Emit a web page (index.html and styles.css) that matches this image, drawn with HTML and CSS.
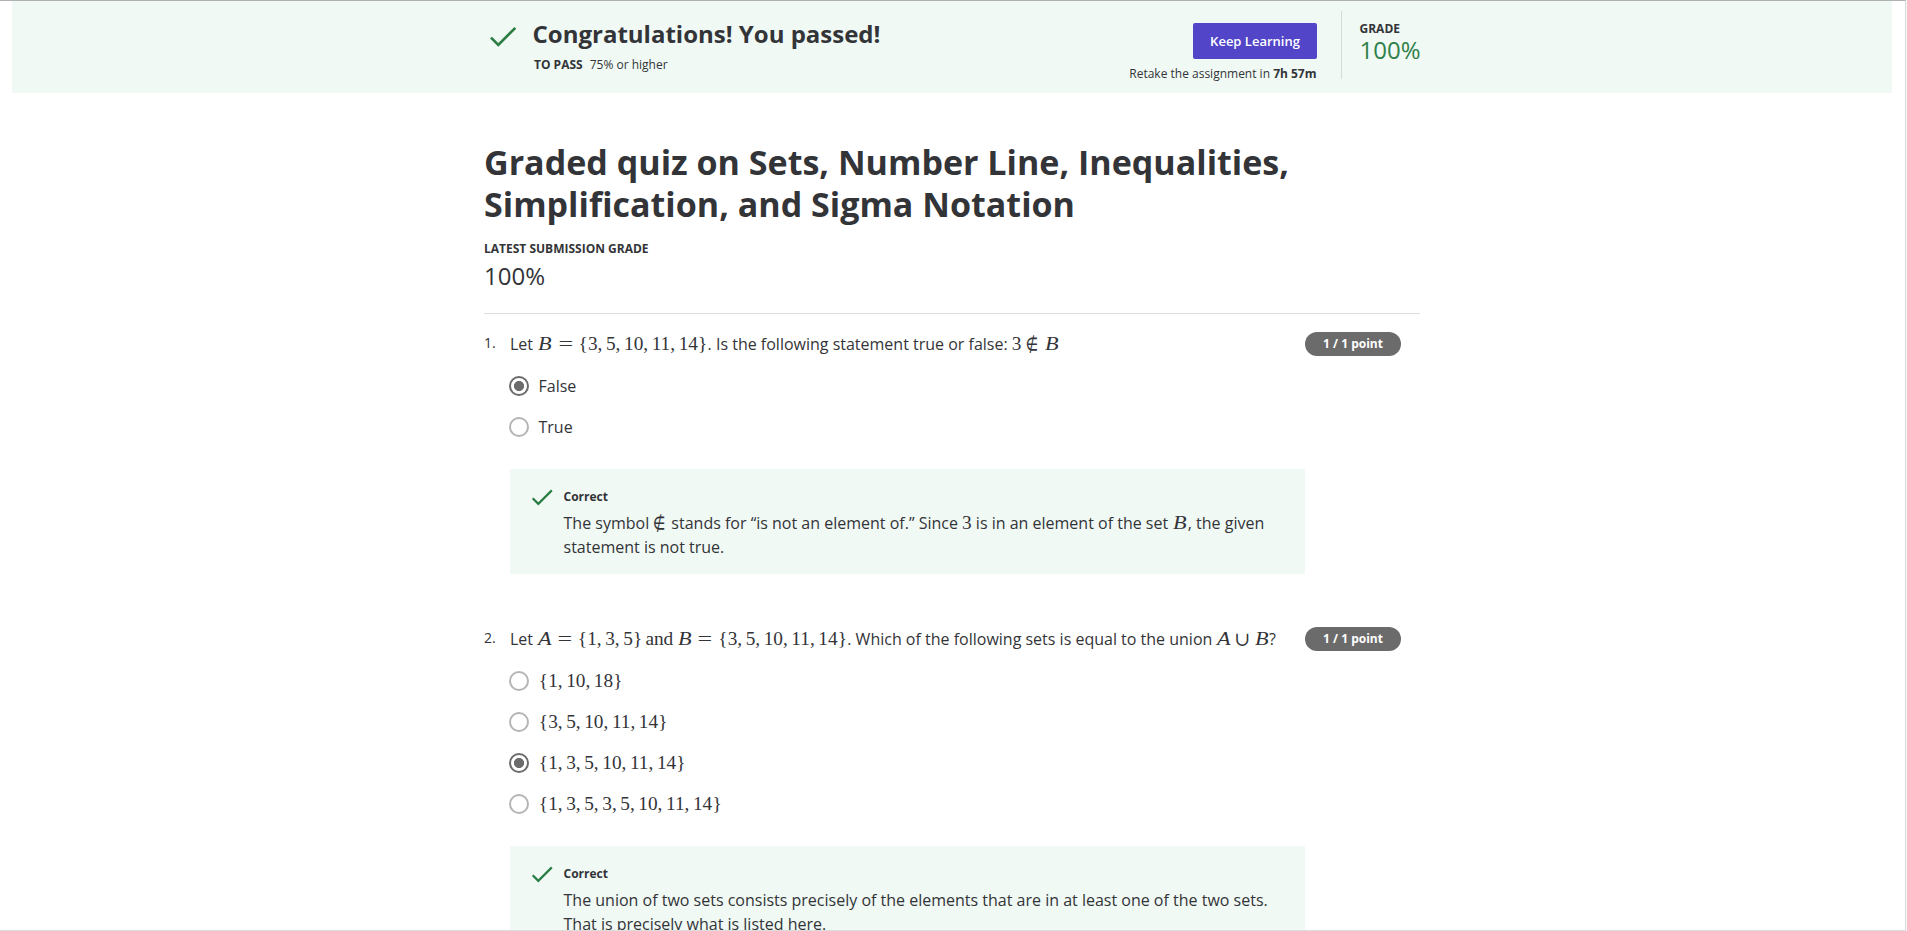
FILE: index.html
```html
<!DOCTYPE html>
<html lang="en">
<head>
<meta charset="utf-8">
<title>Graded quiz</title>
<link rel="stylesheet" href="styles.css">
</head>
<body>
<div class="window">
  <header class="banner">
    <div class="banner-inner">
      <svg class="banner-check" viewBox="0 0 28 24"><path d="M3 13.6 10.3 20.9 27.3 3.9"/></svg>
      <div class="banner-copy">
        <h2 class="banner-title">Congratulations! You passed!</h2>
        <p class="to-pass"><b>TO PASS</b><span>75% or higher</span></p>
      </div>
      <div class="banner-action">
        <button class="keep">Keep Learning</button>
        <p class="retake">Retake the assignment in <b>7h 57m</b></p>
      </div>
      <div class="grade">
        <b class="grade-label">GRADE</b>
        <span class="grade-value">100%</span>
      </div>
    </div>
  </header>
  <main class="quiz">
    <h1 class="quiz-title">Graded quiz on Sets, Number Line, Inequalities,<br>Simplification, and Sigma Notation</h1>
    <p class="latest-label">LATEST SUBMISSION GRADE</p>
    <p class="latest-value">100%</p>

    <section class="question first">
      <div class="prompt">
        <span class="number">1.</span>
        <p class="text">Let <span class="math"><i class="vb">B</i><span class="rel">=</span><span class="br">{</span>3<s>,</s>5<s>,</s>10<s>,</s>11<s>,</s>14<span class="br">}</span></span>. Is the following statement true or false: <span class="math">3<span class="notin">∉</span><i class="vb">B</i></span></p>
        <span class="points">1 / 1 point</span>
      </div>
      <div class="options">
        <label class="option"><span class="radio on"></span>False</label>
        <label class="option"><span class="radio"></span>True</label>
      </div>
      <div class="feedback">
        <svg class="check" viewBox="0 0 22 18"><path d="M1.7 10.3 7.3 15.9 20.8 2.4"/></svg>
        <div class="feedback-copy">
          <b class="correct">Correct</b>
          <p class="explain">The symbol <span class="math"><span class="notin solo">∉</span></span> stands for “is not an element of.” Since <span class="math">3</span> is in an element of the set <span class="math"><i class="vb">B</i></span>, the given<br>statement is not true.</p>
        </div>
      </div>
    </section>

    <section class="question">
      <div class="prompt">
        <span class="number">2.</span>
        <p class="text">Let <span class="math"><i class="va">A</i><span class="rel">=</span><span class="br">{</span>1<s>,</s>3<s>,</s>5<span class="br">}</span><span class="and">and</span><i class="vb">B</i><span class="rel">=</span><span class="br">{</span>3<s>,</s>5<s>,</s>10<s>,</s>11<s>,</s>14<span class="br">}</span></span>. Which of the following sets is equal to the union <span class="math"><i class="va">A</i><span class="cup">∪</span><i class="vb">B</i></span>?</p>
        <span class="points">1 / 1 point</span>
      </div>
      <div class="options">
        <label class="option"><span class="radio"></span><span class="math"><span class="br">{</span>1<s>,</s>10<s>,</s>18<span class="br">}</span></span></label>
        <label class="option"><span class="radio"></span><span class="math"><span class="br">{</span>3<s>,</s>5<s>,</s>10<s>,</s>11<s>,</s>14<span class="br">}</span></span></label>
        <label class="option"><span class="radio on"></span><span class="math"><span class="br">{</span>1<s>,</s>3<s>,</s>5<s>,</s>10<s>,</s>11<s>,</s>14<span class="br">}</span></span></label>
        <label class="option"><span class="radio"></span><span class="math"><span class="br">{</span>1<s>,</s>3<s>,</s>5<s>,</s>3<s>,</s>5<s>,</s>10<s>,</s>11<s>,</s>14<span class="br">}</span></span></label>
      </div>
      <div class="feedback">
        <svg class="check" viewBox="0 0 22 18"><path d="M1.7 10.3 7.3 15.9 20.8 2.4"/></svg>
        <div class="feedback-copy">
          <b class="correct">Correct</b>
          <p class="explain">The union of two sets consists precisely of the elements that are in at least one of the two sets.<br>That is precisely what is listed here.</p>
        </div>
      </div>
    </section>
  </main>
</div>
</body>
</html>
```
FILE: styles.css
```css
* { box-sizing: border-box; margin: 0; padding: 0; }
html, body { height: 931px; overflow: hidden; }
body {
  background: #f5f5f5;
  color: #333438;
  font: 16px/24px "Open Sans", "Noto Sans", sans-serif;
}
.window {
  width: 1906px;
  height: 931px;
  overflow: hidden;
  background: #fff;
  border-top: 1px solid #b1b1b1;
  border-right: 1px solid #dcdcdc;
  border-bottom: 1px solid #dcdcdc;
}
.banner { margin: 0 13px 0 12px; height: 92px; background: #f0f9f4; }
.banner-inner {
  display: flex;
  width: 936px;
  height: 92px;
  margin-left: 472px;
}
.banner-check { width: 28px; height: 24px; margin: 23px 0 0 4px; flex: none; }
.banner-check path, .check path { fill: none; stroke: #2a7e43; stroke-width: 2.7; }
.banner-copy { padding: 17px 0 0 16.5px; }
.banner-title { font-size: 24px; line-height: 32px; font-weight: 700; white-space: nowrap; }
.to-pass { display: flex; gap: 7px; margin: 6px 0 0 1.5px; font-size: 12px; line-height: 18px; }
.banner-action {
  display: flex;
  flex-direction: column;
  align-items: flex-end;
  margin-left: auto;
  padding-top: 22px;
}
.keep {
  width: 124px;
  height: 36px;
  border: 0;
  border-radius: 2px;
  background: #5245c8;
  color: #fff;
  font: 600 13px/36px "Open Sans", sans-serif;
}
.retake { margin: 6px .5px 0 0; font-size: 12px; line-height: 18px; white-space: nowrap; }
.grade {
  display: flex;
  flex-direction: column;
  width: 79px;
  height: 68px;
  margin: 10px 0 0 24px;
  padding: 9px 0 0 17.5px;
  border-left: 1px solid #d8dbd9;
}
.grade-label { font-size: 12px; line-height: 18px; }
.grade-value { margin-top: -2px; color: #2f8048; font-size: 24px; line-height: 28px; }

.quiz { width: 936px; margin: 48px 0 0 484px; }
.quiz-title { font-size: 34.05px; line-height: 42px; font-weight: 700; white-space: nowrap; }
.latest-label { margin-top: 15px; font-size: 12px; line-height: 18px; font-weight: 700; }
.latest-value { margin-top: 2px; font-size: 24px; line-height: 32px; }
.question { height: 295px; }
.question.first { margin-top: 21px; padding-top: 18px; height: 314px; border-top: 1px solid #dcdcdc; }
.prompt { display: flex; }
.number { width: 26px; margin-top: -1px; font-size: 14px; }
.text { width: 795px; white-space: nowrap; }
.points {
  width: 96px;
  height: 24px;
  border-radius: 12px;
  background: #6b6b6b;
  color: #fff;
  font-size: 12px;
  font-weight: 700;
  text-align: center;
}
.options { margin: 9px 0 0 25px; }
.option { display: flex; align-items: center; gap: 9.5px; height: 41px; }
.radio { width: 20px; height: 20px; border: 2px solid #b5b5b5; border-radius: 50%; }
.radio.on { border-color: #6b6b6b; background: radial-gradient(circle, #6b6b6b 4.7px, #fff 5.4px); }
.feedback {
  display: flex;
  width: 795px;
  height: 105px;
  margin: 22px 0 0 26px;
  padding: 19px 0 0 21px;
  background: #f0f9f4;
}
.check { width: 22px; height: 18px; flex: none; }
.check path { stroke-width: 2.2; }
.feedback-copy { margin-left: 10.5px; }
.correct { display: block; font-size: 12px; line-height: 18px; }
.explain { margin-top: 5px; white-space: nowrap; }

.math { font: 19.3px/0 "Liberation Serif", "Times New Roman", serif; }
.math s { margin-right: .185em; text-decoration: none; }
.math .br { display: inline-block; width: .5em; text-align: center; }
.rel { display: inline-block; width: 1.33em; text-align: center; transform: scaleX(1.35); }
.va, .vb { display: inline-block; width: .76em; padding-left: .04em; transform: scaleX(1.15); transform-origin: 0 0; }
.vb { width: .8em; }
.notin { display: inline-block; width: 1.06em; font-family: "DejaVu Math TeX Gyre", "DejaVu Serif", serif; font-size: 21px; text-align: center; transform: scaleX(.74); }
.notin.solo { width: .66em; transform-origin: 0 0; }
.cup { display: inline-block; width: 1.18em; font-family: "DejaVu Math TeX Gyre", "DejaVu Serif", serif; font-size: 19px; text-align: center; }
.and { margin: 0 .19em 0 .15em; }
```
